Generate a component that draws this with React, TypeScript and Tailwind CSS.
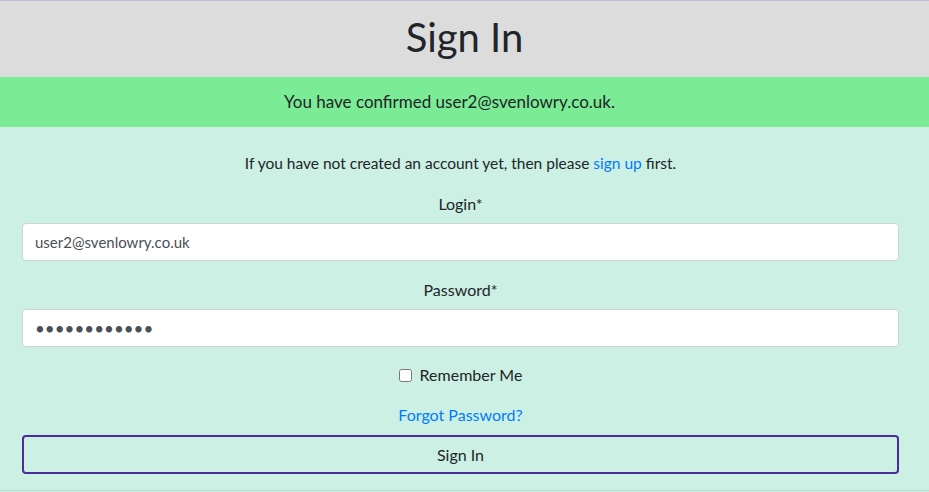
import React from 'react';

const App: React.FC = () => {
  return (
    <div className="min-h-[492px] bg-[#ccf0e3] text-[#212529] font-['Lato',sans-serif] border-t border-[#b9c0dc]">
      <header className="h-[76px] bg-[#dcdcdc] flex items-center justify-center">
        <h1 className="text-[40px] font-normal leading-none pb-1">Sign In</h1>
      </header>

      <div className="h-[50px] bg-[#7beb96] flex items-center justify-center pr-[30px] text-[17px]">
        You have confirmed user2@svenlowry.co.uk.
      </div>

      <main className="pt-6 pl-[22px] pr-[30px] pb-4 border-b border-[#b5dccd] text-center text-base">
        <p className="leading-6 text-[15.5px]">
          If you have not created an account yet, then please{' '}
          <a href="#" className="text-[#007bff]">sign up</a> first.
        </p>

        <form className="mt-[17px]" onSubmit={(e) => e.preventDefault()}>
          <label htmlFor="login" className="block leading-6">Login*</label>
          <input
            id="login"
            type="text"
            defaultValue="user2@svenlowry.co.uk"
            className="mt-[7px] block w-full h-[38px] px-3 rounded border border-[#ced4da] bg-white text-[15px] text-[#495057] outline-none"
          />

          <label htmlFor="password" className="block leading-6 mt-[17px]">Password*</label>
          <input
            id="password"
            type="password"
            defaultValue="passwordpass"
            className="mt-[7px] block w-full h-[38px] px-3 rounded border border-[#ced4da] bg-white text-[17px] text-[#495057] outline-none"
          />

          <label className="mt-4 flex items-center justify-center gap-2 leading-6">
            <input type="checkbox" className="w-[13px] h-[13px]" />
            Remember Me
          </label>

          <a href="#" className="mt-4 block leading-6 text-[#007bff]">Forgot Password?</a>

          <button
            type="submit"
            className="mt-2 block w-full h-[39px] rounded border-2 border-[#4b2c9a] bg-transparent text-base"
          >
            Sign In
          </button>
        </form>
      </main>
    </div>
  );
};

export default App;
